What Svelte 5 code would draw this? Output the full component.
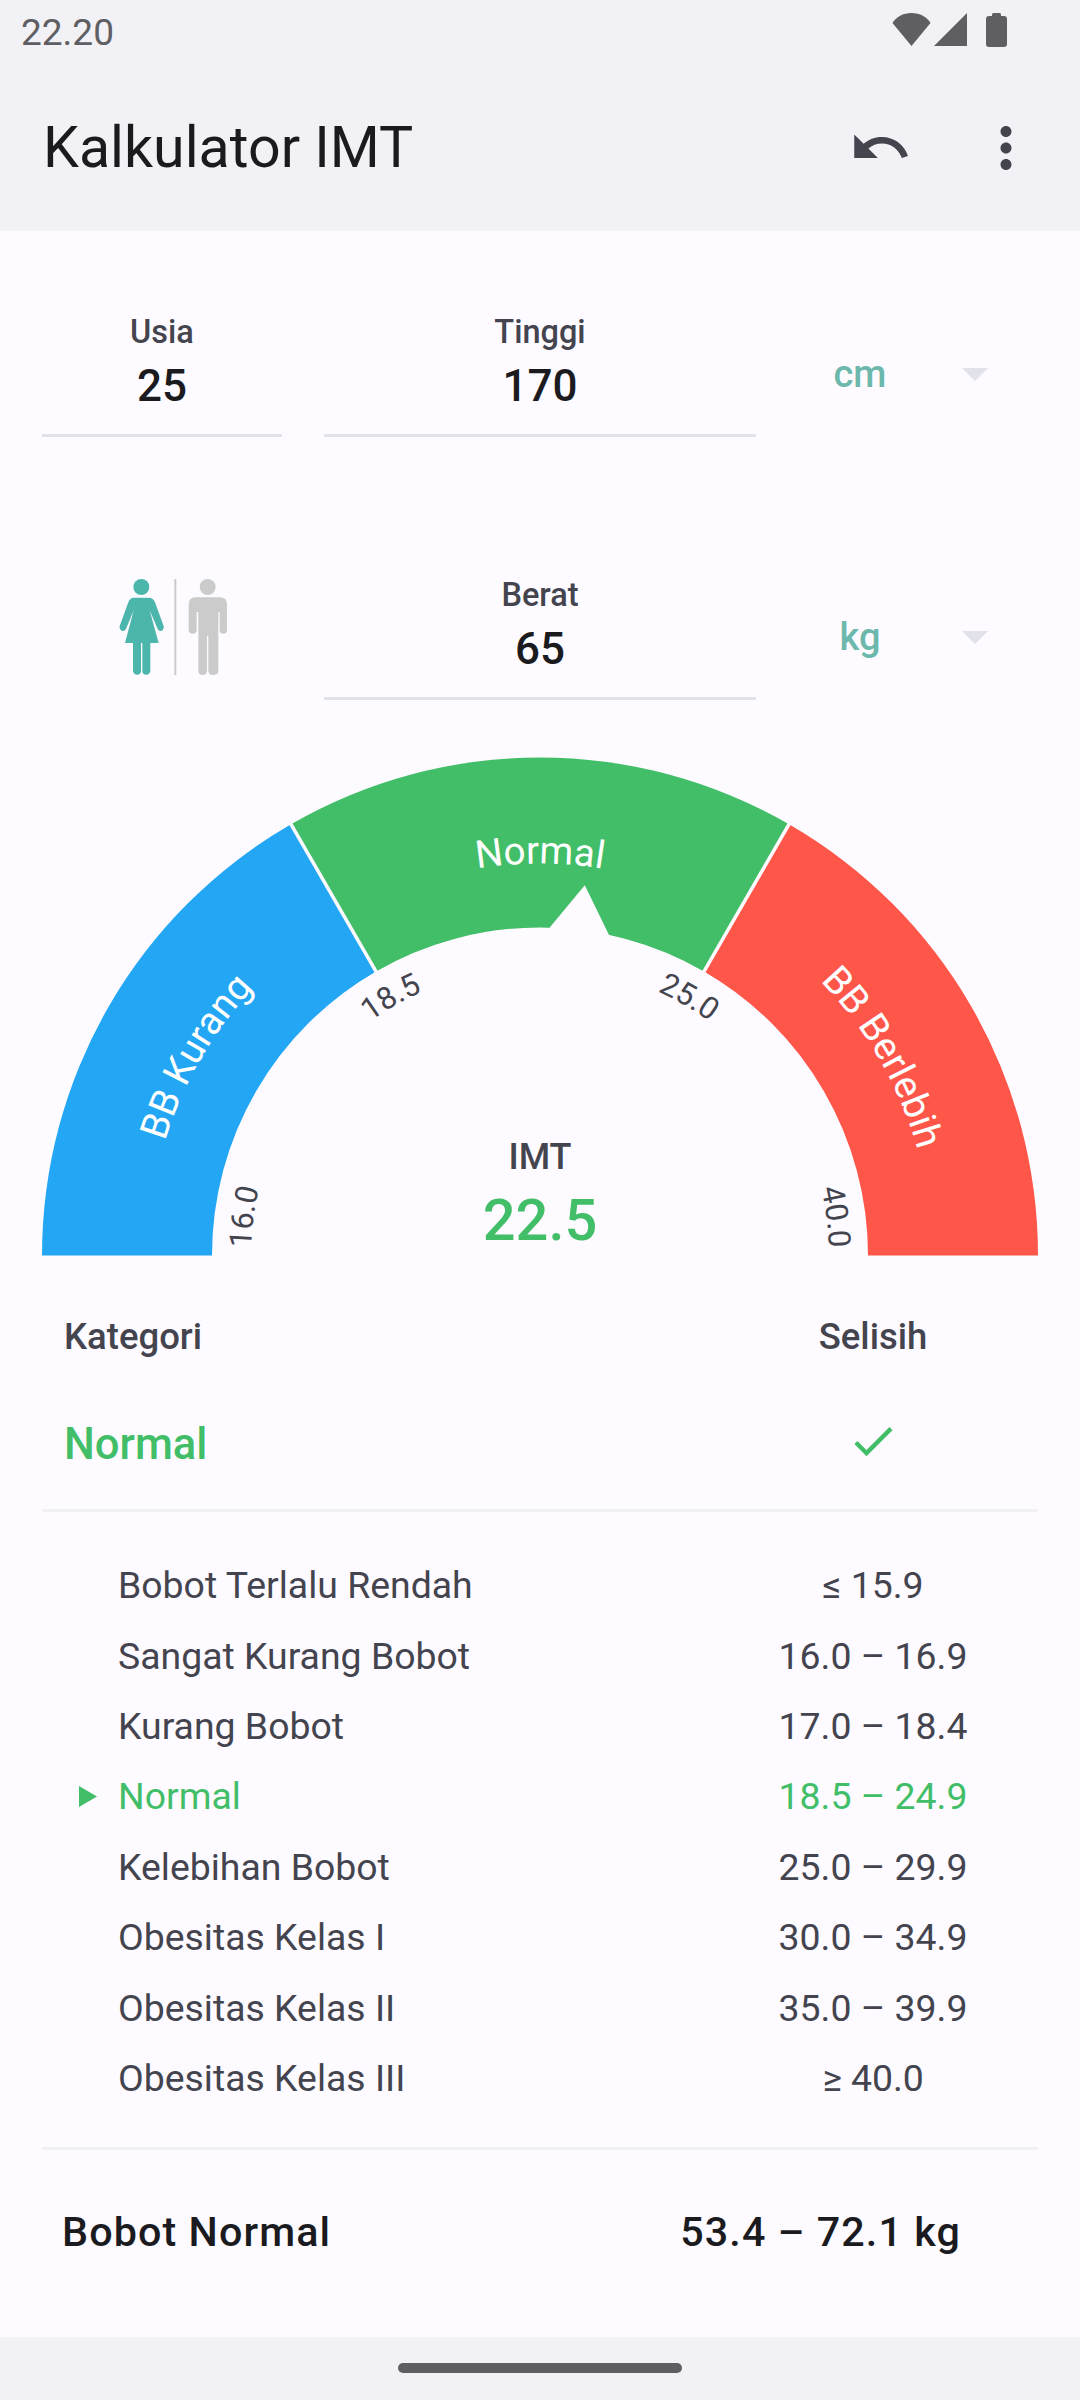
<script lang="ts">
	const cx = 540;
	const cy = 505.5;
	const rOut = 498;
	const rIn = 328;

	const pt = (deg: number, r: number) => {
		const a = (deg * Math.PI) / 180;
		return [cx - r * Math.cos(a), cy - r * Math.sin(a)];
	};

	// deg counts clockwise from the left end of the gauge
	const sector = (from: number, to: number) => {
		const [x1, y1] = pt(from, rOut);
		const [x2, y2] = pt(to, rOut);
		const [x3, y3] = pt(to, rIn);
		const [x4, y4] = pt(from, rIn);
		return `M${x1} ${y1}A${rOut} ${rOut} 0 0 1 ${x2} ${y2}L${x3} ${y3}A${rIn} ${rIn} 0 0 0 ${x4} ${y4}Z`;
	};
	const arc = (r: number) => `M${cx - r} ${cy}A${r} ${r} 0 0 1 ${cx + r} ${cy}`;

	const segments = [
		{ d: sector(0, 60), fill: '#23a7f5' },
		{ d: sector(60, 120), fill: '#42be68' },
		{ d: sector(120, 180), fill: '#ff564a' }
	];
	const zones = [
		{ label: 'BB Kurang', at: 30 },
		{ label: 'Normal', at: 90 },
		{ label: 'BB Berlebih', at: 150 }
	];
	const ticks = [
		{ label: '16.0', at: 7.5 },
		{ label: '18.5', at: 60 },
		{ label: '25.0', at: 120 },
		{ label: '40.0', at: 172.5 }
	];
	const seps = [60, 120].map((a) => [pt(a, rIn - 1), pt(a, rOut + 1)]);

	const ranges = [
		['Bobot Terlalu Rendah', '≤ 15.9'],
		['Sangat Kurang Bobot', '16.0 – 16.9'],
		['Kurang Bobot', '17.0 – 18.4'],
		['Normal', '18.5 – 24.9'],
		['Kelebihan Bobot', '25.0 – 29.9'],
		['Obesitas Kelas I', '30.0 – 34.9'],
		['Obesitas Kelas II', '35.0 – 39.9'],
		['Obesitas Kelas III', '≥ 40.0']
	];
</script>

<div class="app">
	<div class="status">
		<span class="time">22.20</span>
		<div class="status-icons">
			<svg width="39" height="33" viewBox="0 0 39 33"><path d="M19.5 33 0.5 10C4 4 11 0 19.5 0S35 4 38.5 10Z" /></svg>
			<svg width="33" height="33" viewBox="0 0 33 33"><path d="M33 0V33H0Z" /></svg>
			<svg width="21" height="34" viewBox="0 0 21 34"><path d="M6 3V1.5Q6 0 7.5 0H13.500Q15 0 15 1.500V3H18Q21 3 21 6V31Q21 34 18 34H3Q0 34 0 31V6Q0 3 3 3Z" /></svg>
		</div>
	</div>

	<header class="appbar">
		<h1>Kalkulator IMT</h1>
		<svg class="undo" width="63" height="63" viewBox="0 0 24 24"><path d="M12.5 8c-2.65 0-5.05.99-6.9 2.6L2 7v9h9l-3.62-3.62c1.39-1.16 3.16-1.88 5.12-1.88 3.54 0 6.55 2.31 7.6 5.5l2.37-.78C21.08 11.03 17.15 8 12.5 8z" /></svg>
		<svg class="more" width="66" height="66" viewBox="0 0 24 24"><path d="M12 8c1.1 0 2-.9 2-2s-.9-2-2-2-2 .9-2 2 .9 2 2 2zm0 2c-1.100 0-2 .9-2 2s.9 2 2 2 2-.9 2-2-.9-2-2-2zm0 6c-1.100 0-2 .9-2 2s.9 2 2 2 2-.9 2-2-.9-2-2-2z" /></svg>
	</header>

	<main>
		<section class="inputs">
			<div class="field">
				<span class="label">Usia</span>
				<span class="value">25</span>
			</div>
			<div class="field">
				<span class="label">Tinggi</span>
				<span class="value">170</span>
			</div>
			<div class="unit">
				<span>cm</span>
				<i class="caret"></i>
			</div>

			<svg class="gender" width="116.67" height="100" viewBox="80 50 350 300">
				<g fill="#4db6ac">
					<circle cx="153" cy="80" r="24" />
					<path d="M130 112H177Q188 112 194 126L220 197Q222 208 212 212Q205 213 202 206L178 150 205 248H180V332Q178 343 168 343Q156 343 156 332V248H152V332Q152 343 140 343Q130 343 128 332V248H104L130 150 107 206Q103 213 96 212Q86 208 88 197L114 126Q119 112 130 112Z" />
				</g>
				<rect x="252" y="56" width="6" height="288" fill="#cbcbcb" />
				<g fill="#cbcbcb">
					<circle cx="352" cy="80" r="24" />
					<path d="M316 111H389Q410 111 410 132V208Q410 220 399 220Q388 220 388 208V155H384V332Q384 344 368 344Q355 344 354 332V226H350V332Q349 344 337 344Q324 344 324 332V155H319V208Q319 220 307 220Q295 220 295 208V132Q295 111 316 111Z" />
				</g>
			</svg>
			<div class="field">
				<span class="label">Berat</span>
				<span class="value">65</span>
			</div>
			<div class="unit">
				<span>kg</span>
				<i class="caret"></i>
			</div>
		</section>

		<svg class="gauge" width="1080" height="510" viewBox="0 0 1080 510">
			<defs>
				<path id="zone-arc" d={arc(392)} />
				<path id="tick-arc" d={arc(289)} />
			</defs>
			{#each segments as s}
				<path d={s.d} fill={s.fill} />
			{/each}
			{#each seps as [a, b]}
				<line x1={a[0]} y1={a[1]} x2={b[0]} y2={b[1]} stroke="#fdfbff" stroke-width="3.5" />
			{/each}
			<polygon points="549.300,178 584.800,135.300 609,185 600,200 555,200" fill="#fdfbff" />
			{#each zones as z}
				<text class="zone" text-anchor="middle">
					<textPath href="#zone-arc" startOffset="{(z.at / 180) * 100}%">{z.label}</textPath>
				</text>
			{/each}
			{#each ticks as t}
				<text class="tick" text-anchor="middle">
					<textPath href="#tick-arc" startOffset="{(t.at / 180) * 100}%">{t.label}</textPath>
				</text>
			{/each}
			<text class="imt-label" x="540" y="419" text-anchor="middle">IMT</text>
			<text class="imt-value" x="540" y="490" text-anchor="middle">22.5</text>
		</svg>

		<div class="cat-row head">
			<span>Kategori</span>
			<span class="right">Selisih</span>
		</div>
		<div class="cat-row current">
			<span>Normal</span>
			<span class="right">
				<svg class="check" width="52" height="52" viewBox="0 0 24 24"><path d="M9 16.170L4.830 12l-1.420 1.410L9 19 21 7l-1.410-1.410z" /></svg>
			</span>
		</div>

		<ul class="ranges">
			{#each ranges as [name, range]}
				<li class:active={name === 'Normal'}>
					{#if name === 'Normal'}
						<svg class="marker" width="18" height="21" viewBox="0 0 18 21"><path d="M0 0 18 10.500 0 21Z" /></svg>
					{/if}
					<span class="name">{name}</span>
					<span class="range">{range}</span>
				</li>
			{/each}
		</ul>

		<div class="summary">
			<span>Bobot Normal</span>
			<span>53.4 – 72.1 kg</span>
		</div>
	</main>

	<footer class="navbar">
		<div class="handle"></div>
	</footer>
</div>

<style>
	:global(body) {
		background: #fdfbff;
	}
	.app {
		display: flex;
		flex-direction: column;
		width: 1080px;
		height: 2400px;
		font-family: Roboto, sans-serif;
		color: #44444f;
		background: #fdfbff;
	}

	.status {
		display: flex;
		align-items: flex-start;
		justify-content: space-between;
		height: 66px;
		padding: 13px 73px 0 21px;
		box-sizing: border-box;
		background: #f1f1f6;
	}
	.time {
		font-size: 37px;
		line-height: 36px;
		margin-top: 2px;
		color: #5f5f63;
	}
	.status-icons {
		display: flex;
		gap: 3px;
	}
	.status-icons svg {
		fill: #5f5f63;
	}
	.status-icons svg:last-child {
		margin-left: 16px;
	}

	.appbar {
		display: flex;
		align-items: center;
		height: 165px;
		padding: 0 41px 2px 43px;
		box-sizing: border-box;
		background: #f1f1f6;
	}
	h1 {
		flex: 1;
		margin: 0;
		font-size: 57.3px;
		font-weight: 400;
		color: #1b1b1f;
	}
	.appbar svg {
		fill: #44444f;
	}
	.more {
		margin-left: 61.5px;
	}

	main {
		flex: 1;
	}

	.inputs {
		display: grid;
		grid-template-columns: 240px 432px 1fr;
		column-gap: 42px;
		row-gap: 136px;
		padding: 79px 42px 0;
	}
	.field {
		display: flex;
		flex-direction: column;
		align-items: center;
		height: 127px;
		box-sizing: border-box;
		border-bottom: 3px solid #e2e2ea;
	}
	.label {
		font-size: 32.5px;
		font-weight: 475;
		line-height: 44px;
	}
	.value {
		margin-top: 4px;
		font-size: 44px;
		font-weight: 475;
		line-height: 56px;
		color: #1b1b1f;
	}
	.unit {
		display: flex;
		align-items: center;
		height: 72px;
		margin-top: 28px;
		font-size: 38px;
		font-weight: 475;
		color: #6db8ac;
	}
	.unit span {
		width: 124px;
		text-align: center;
	}
	.caret {
		width: 0;
		height: 0;
		margin-left: 40px;
		border-left: 13px solid transparent;
		border-right: 13px solid transparent;
		border-top: 13px solid #e2e2ea;
	}
	.gender {
		justify-self: end;
		align-self: start;
		margin: 4px 48px 0 0;
	}

	.gauge {
		display: block;
		margin-top: 50px;
	}
	.zone {
		font-size: 38.5px;
		fill: #ffffff;
	}
	.tick {
		font-size: 31px;
		fill: #44444f;
	}
	.imt-label {
		font-size: 36px;
		font-weight: 475;
		fill: #44444f;
	}
	.imt-value {
		font-size: 57.75px;
		font-weight: 475;
		fill: #42be68;
	}

	.cat-row {
		display: flex;
		justify-content: space-between;
		align-items: center;
		padding: 0 57px 0 64px;
	}
	.right {
		display: flex;
		justify-content: center;
		width: 300px;
	}
	.head {
		height: 44px;
		margin-top: 54px;
		font-size: 36.5px;
		font-weight: 475;
	}
	.current {
		height: 60px;
		margin-top: 56px;
		font-size: 43.5px;
		font-weight: 475;
		color: #42be68;
	}
	.check {
		margin-top: -6px;
		fill: #42be68;
	}

	.ranges {
		list-style: none;
		margin: 35px 42px 0;
		padding: 38px 0 34px;
		border-top: 3px solid #f0f0f5;
		border-bottom: 3px solid #f0f0f5;
	}
	.ranges li {
		display: flex;
		align-items: center;
		height: 70.4px;
		font-size: 37.4px;
	}
	.name {
		flex: 1;
		margin-left: 76px;
	}
	.range {
		width: 300px;
		margin-right: 15px;
		text-align: center;
	}
	.active {
		color: #42be68;
	}
	.marker {
		margin-left: 37px;
		margin-right: -55px;
		fill: #42be68;
	}

	.summary {
		display: flex;
		justify-content: space-between;
		align-items: center;
		height: 60px;
		margin-top: 52px;
		padding: 0 119px 0 62px;
		font-size: 41.25px;
		font-weight: 475;
		letter-spacing: 1.1px;
		color: #1b1b1f;
	}

	.navbar {
		display: flex;
		justify-content: center;
		height: 63px;
		padding-top: 26px;
		box-sizing: border-box;
		background: #f1f1f6;
	}
	.handle {
		width: 284px;
		height: 10px;
		border-radius: 5px;
		background: #5f5f63;
	}
</style>
